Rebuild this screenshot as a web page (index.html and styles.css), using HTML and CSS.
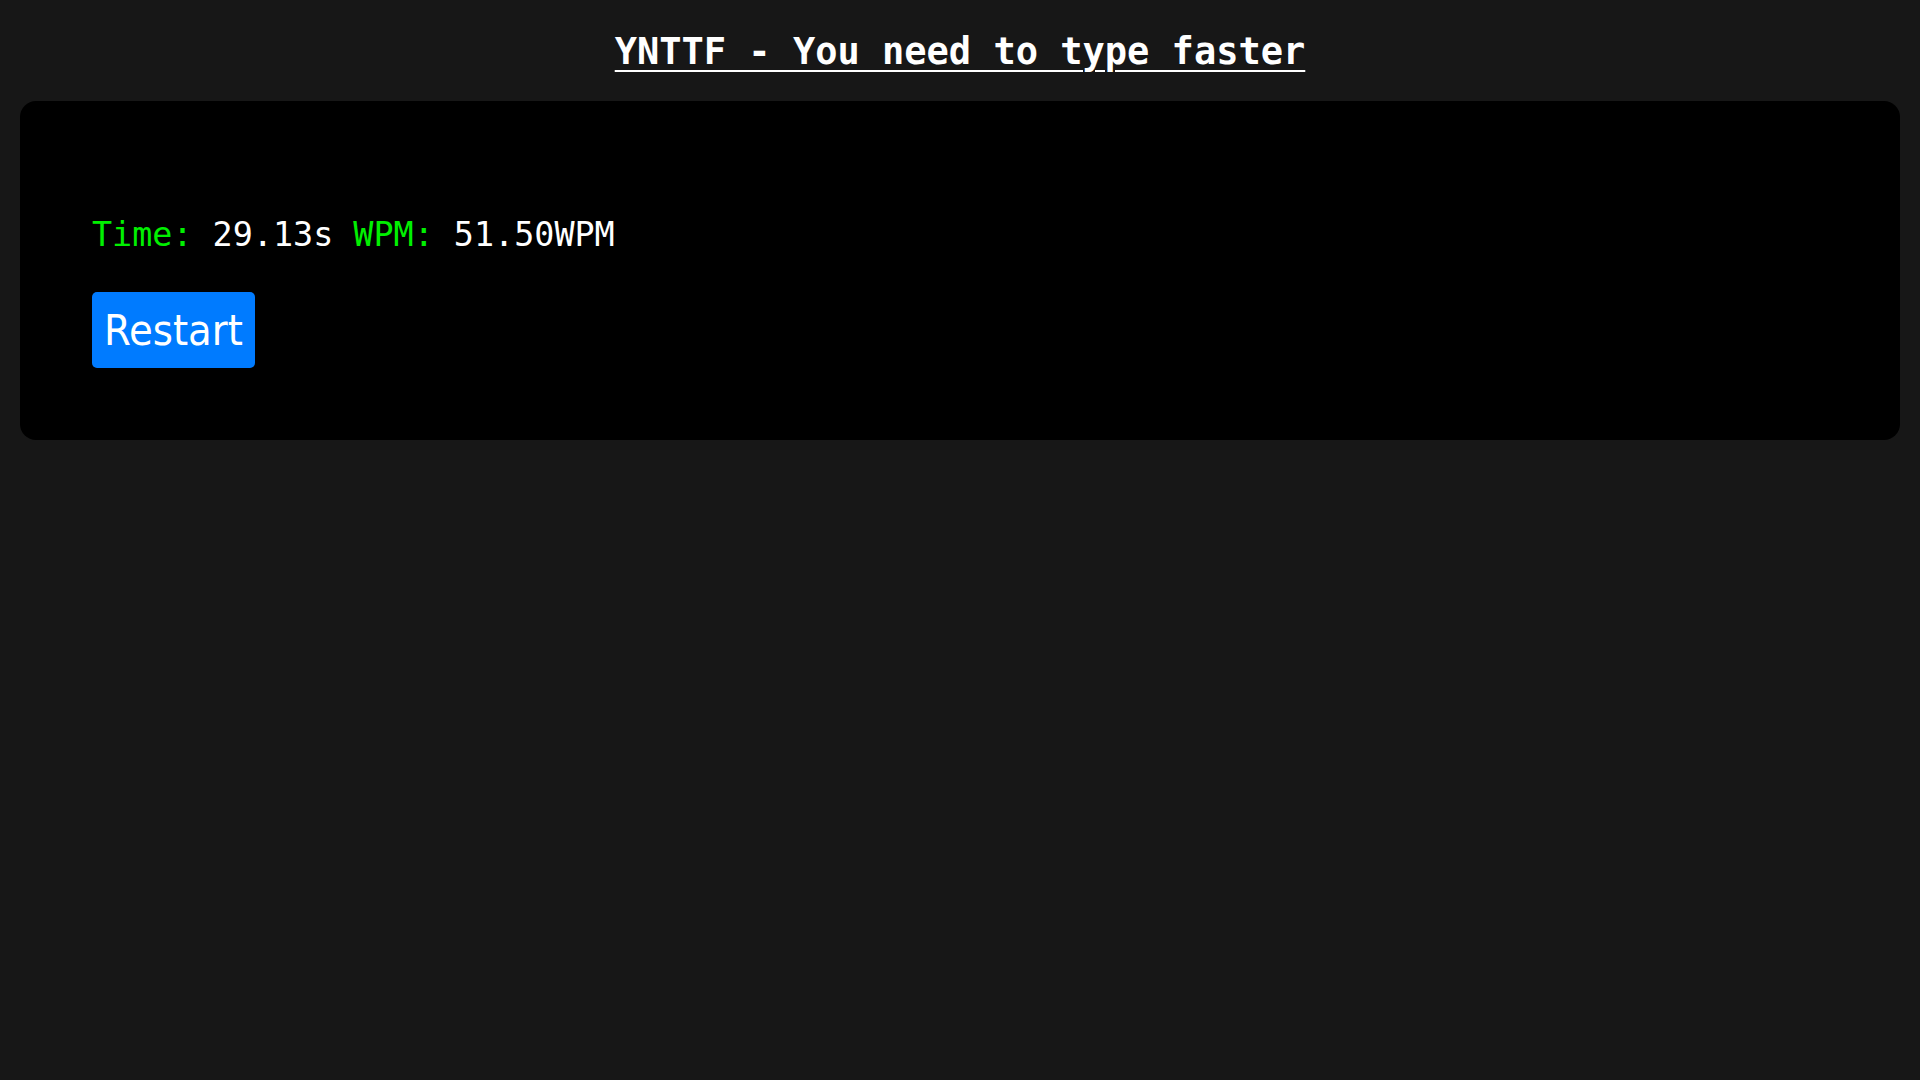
FILE: index.html
```html
<!DOCTYPE html>
<html lang="en">
<head>
<meta charset="utf-8">
<title>YNTTF</title>
<link rel="stylesheet" href="styles.css">
</head>
<body>
<h1 class="title">YNTTF - You need to type faster</h1>
<main class="card">
  <div class="words"></div>
  <p class="stats"><span class="label">Time:</span> 29.13s <span class="label">WPM:</span> 51.50WPM</p>
  <button class="restart">Restart</button>
</main>
</body>
</html>
```

FILE: styles.css
```css
html, body {
  margin: 0;
  padding: 0;
  background: #171717;
  color: #fff;
}
body {
  padding: 30px 20px 0;
}
.title {
  margin: 0 0 28px;
  text-align: center;
  font-family: "DejaVu Sans Mono", monospace;
  font-weight: bold;
  font-size: 37px;
  text-decoration: underline;
  text-decoration-thickness: 2px;
  text-underline-offset: 6px;
  color: #fff;
}
.card {
  background: #000;
  border-radius: 16px;
  padding: 72px 72px;
  display: flex;
  flex-direction: column;
  align-items: flex-start;
}
.words {
  height: 42px;
}
.stats {
  margin: 0 0 38px;
  font-family: "DejaVu Sans Mono", monospace;
  font-size: 33.4px;
  color: #fff;
}
.label {
  color: #00f000;
}
.restart {
  height: 76px;
  padding: 0 12px;
  border: none;
  border-radius: 5px;
  background: #007bff;
  color: #fff;
  font-family: "DejaVu Sans Condensed", "DejaVu Sans", sans-serif;
  font-size: 43px;
  cursor: pointer;
}
```
